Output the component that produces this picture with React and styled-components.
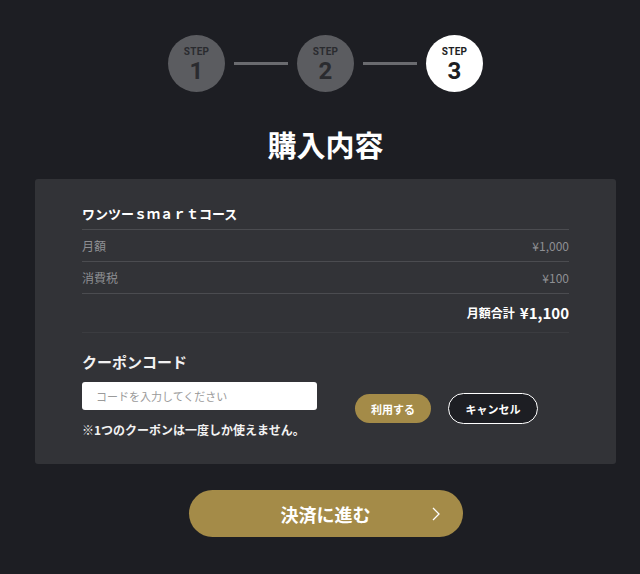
import React, { useState } from 'react';
import styled, { createGlobalStyle } from 'styled-components';

const GlobalStyle = createGlobalStyle`
  html, body {
    margin: 0;
    padding: 0;
    background: #1d1e23;
    font-family: 'Noto Sans CJK JP', 'Noto Sans', sans-serif;
  }
`;

const Page = styled.div`
  box-sizing: border-box;
  width: 640px;
  min-height: 574px;
  padding: 35px 0 0 11px;
  background: #1d1e23;
  color: #fff;
`;

const Steps = styled.div`
  display: flex;
  align-items: center;
  justify-content: center;
  gap: 9px;
`;

const StepCircle = styled.div`
  width: 57px;
  height: 57px;
  border-radius: 50%;
  background: ${p => (p.active ? '#ffffff' : '#5b5c60')};
  color: ${p => (p.active ? '#1d1e23' : '#2a2b2f')};
  display: flex;
  flex-direction: column;
  align-items: center;
  justify-content: center;
  font-family: 'Roboto', 'DejaVu Sans', sans-serif;
  font-weight: 700;
`;

const StepLabel = styled.span`
  font-size: 10px;
  line-height: 11px;
  letter-spacing: 0.3px;
`;

const StepNumber = styled.span`
  font-size: 24px;
  line-height: 20px;
  margin-top: 4px;
`;

const StepLine = styled.div`
  width: 54px;
  height: 3px;
  background: #6a6b6f;
`;

const Title = styled.h1`
  margin: 32px 0 0;
  text-align: center;
  font-size: 29px;
  line-height: 40px;
  font-weight: 700;
  color: #fff;
`;

const Card = styled.section`
  box-sizing: border-box;
  width: 581px;
  margin: 15px auto 0;
  padding: 25px 47px 25px;
  background: #323337;
  border-radius: 3px;
`;

const CourseName = styled.div`
  font-size: 13px;
  line-height: 20px;
  font-weight: 700;
  padding-bottom: 5px;
  border-bottom: 1px solid #4b4c50;
  color: #fff;
`;

const PriceRow = styled.div`
  display: flex;
  justify-content: space-between;
  align-items: center;
  height: 31px;
  border-bottom: 1px solid #4b4c50;
  font-size: 12px;
  color: #8e8f93;
`;

const TotalRow = styled.div`
  display: flex;
  justify-content: flex-end;
  align-items: center;
  gap: 5px;
  height: 37px;
  padding-bottom: 1px;
  border-bottom: 1px solid #3b3c40;
  font-weight: 700;
  color: #fff;
`;

const TotalLabel = styled.span`
  font-size: 12px;
`;

const TotalValue = styled.span`
  font-size: 15px;
`;

const CouponTitle = styled.h2`
  margin: 18px 0 0;
  font-size: 15px;
  line-height: 22px;
  font-weight: 700;
  color: #f2f2f2;
`;

const CouponBody = styled.div`
  display: flex;
  align-items: flex-start;
  margin-top: 9px;
`;

const CouponField = styled.div`
  width: 235px;
`;

const CodeInput = styled.input`
  box-sizing: border-box;
  width: 100%;
  height: 28px;
  padding: 0 14px;
  border: none;
  border-radius: 3px;
  background: #fff;
  font-family: inherit;
  font-size: 11px;
  color: #333;
  outline: none;

  &::placeholder {
    color: #9a9a9a;
  }
`;

const Note = styled.p`
  margin: 11px 0 0;
  font-size: 12px;
  line-height: 18px;
  font-weight: 700;
  color: #f2f2f2;
`;

const Actions = styled.div`
  display: flex;
  gap: 17px;
  margin: 12px 0 0 38px;
`;

const PillButton = styled.button`
  box-sizing: border-box;
  height: ${p => (p.outline ? '31px' : '29px')};
  margin-top: ${p => (p.outline ? '-1px' : '0')};
  padding: 0;
  width: ${p => (p.outline ? '90px' : '76px')};
  border-radius: 16px;
  border: ${p => (p.outline ? '1px solid #ffffff' : 'none')};
  background: ${p => (p.outline ? '#1d1e23' : '#a48b48')};
  color: #fff;
  font-family: inherit;
  font-size: 11px;
  font-weight: 700;
  cursor: pointer;
`;

const CheckoutButton = styled.button`
  position: relative;
  display: block;
  width: 274px;
  height: 47px;
  margin: 26px auto 0;
  border: none;
  border-radius: 24px;
  background: #a48b48;
  color: #fff;
  font-family: inherit;
  font-size: 18px;
  font-weight: 700;
  cursor: pointer;
`;

const Chevron = styled.svg`
  position: absolute;
  right: 22px;
  top: 50%;
  transform: translateY(-50%);
`;

const steps = [1, 2, 3];

export default function App() {
  const [code, setCode] = useState('');

  return (
    <>
      <GlobalStyle />
      <Page>
        <Steps>
          {steps.map((n, i) => (
            <React.Fragment key={n}>
              {i > 0 && <StepLine />}
              <StepCircle active={n === 3}>
                <StepLabel>STEP</StepLabel>
                <StepNumber>{n}</StepNumber>
              </StepCircle>
            </React.Fragment>
          ))}
        </Steps>

        <Title>購入内容</Title>

        <Card>
          <CourseName>ワンツーｓｍａｒｔコース</CourseName>
          <PriceRow>
            <span>月額</span>
            <span>¥1,000</span>
          </PriceRow>
          <PriceRow>
            <span>消費税</span>
            <span>¥100</span>
          </PriceRow>
          <TotalRow>
            <TotalLabel>月額合計</TotalLabel>
            <TotalValue>¥1,100</TotalValue>
          </TotalRow>

          <CouponTitle>クーポンコード</CouponTitle>
          <CouponBody>
            <CouponField>
              <CodeInput
                value={code}
                onChange={e => setCode(e.target.value)}
                placeholder="コードを入力してください"
              />
              <Note>※1つのクーポンは一度しか使えません。</Note>
            </CouponField>
            <Actions>
              <PillButton>利用する</PillButton>
              <PillButton outline>キャンセル</PillButton>
            </Actions>
          </CouponBody>
        </Card>

        <CheckoutButton>
          決済に進む
          <Chevron width="10" height="16" viewBox="0 0 10 16">
            <polyline points="2,2 8,8 2,14" fill="none" stroke="#fff" strokeWidth="1.3" />
          </Chevron>
        </CheckoutButton>
      </Page>
    </>
  );
}
